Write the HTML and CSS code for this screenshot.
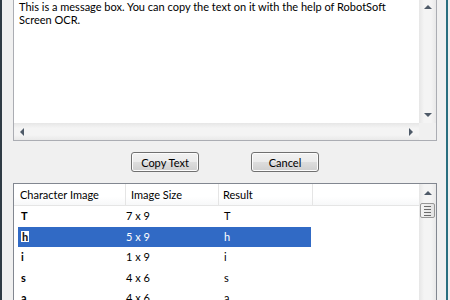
FILE: index.html
```html
<!DOCTYPE html>
<html lang="en">
<head>
    <meta charset="UTF-8">
    <meta name="viewport" content="width=device-width, initial-scale=1.0">
    <title>RobotSoft Screen OCR</title>
    <link rel="stylesheet" href="styles.css">
</head>
<body>
    <div class="window">
        <div class="message-box">
            <div class="message-main">
                <p class="message-text">This is a message box. You can copy the text on it with the help of RobotSoft<br>Screen OCR.</p>
                <div class="vscroll">
                    <span class="arrow up"></span>
                    <span class="arrow down"></span>
                </div>
            </div>
            <div class="hscroll">
                <div class="hscroll-track">
                    <span class="arrow left"></span>
                    <span class="arrow right"></span>
                </div>
                <div class="corner"></div>
            </div>
        </div>

        <div class="button-row">
            <button type="button">Copy Text</button>
            <button type="button">Cancel</button>
        </div>

        <div class="result-list">
            <div class="list-main">
                <div class="list-header">
                    <div class="col col-char">Character Image</div>
                    <div class="col col-size">Image Size</div>
                    <div class="col col-result">Result</div>
                    <div class="col col-fill"></div>
                </div>
                <div class="list-row">
                    <span class="char-img">T</span><span>7 x 9</span><span>T</span>
                </div>
                <div class="list-row selected">
                    <span class="char-img"><b class="glyph">h</b></span><span>5 x 9</span><span>h</span>
                </div>
                <div class="list-row">
                    <span class="char-img">i</span><span>1 x 9</span><span>i</span>
                </div>
                <div class="list-row">
                    <span class="char-img">s</span><span>4 x 6</span><span>s</span>
                </div>
                <div class="list-row">
                    <span class="char-img">a</span><span>4 x 6</span><span>a</span>
                </div>
            </div>
            <div class="list-scroll">
                <div class="scroll-btn"><span class="arrow up"></span></div>
                <div class="thumb"><i></i><i></i><i></i><i></i></div>
            </div>
        </div>
    </div>
</body>
</html>
```

FILE: styles.css
```css
* {
    box-sizing: border-box;
    margin: 0;
    padding: 0;
}

body {
    width: 450px;
    height: 300px;
    overflow: hidden;
    background: #f0f0f0;
    font-family: Lato, "Open Sans", sans-serif;
    font-size: 11px;
    color: #000;
}

.window {
    width: 448px;
    height: 300px;
    display: flex;
    flex-direction: column;
    padding: 0 9px 0 11px;
    border-left: 2px solid #2f3b45;
    border-right: 2px solid #2a6f80;
}

/* message box */
.message-box {
    flex-shrink: 0;
    height: 141px;
    display: flex;
    flex-direction: column;
    background: #fff;
    border: 1px solid #abadb3;
    border-top: none;
}

.message-main {
    flex: 1;
    display: flex;
}

.message-text {
    flex: 1;
    padding: 0 5px;
    line-height: 13px;
}

.vscroll {
    width: 17px;
    display: flex;
    flex-direction: column;
    justify-content: space-between;
    align-items: center;
    padding: 5px 0 6px;
    background: linear-gradient(to right, #e6e6e6, #f4f4f4 30%, #f4f4f4 70%, #e9e9e9);
}

.hscroll {
    height: 17px;
    display: flex;
}

.hscroll-track {
    flex: 1;
    display: flex;
    justify-content: space-between;
    align-items: center;
    padding: 0 6px;
    background: linear-gradient(#e6e6e6, #f4f4f4 30%, #f4f4f4 70%, #e9e9e9);
}

.corner {
    width: 17px;
    background: #f0f0f0;
}

.arrow {
    width: 0;
    height: 0;
    border: 4px solid transparent;
}

.arrow.up {
    border-top: none;
    border-bottom: 4px solid #4e5a68;
}

.arrow.down {
    border-bottom: none;
    border-top: 4px solid #4e5a68;
}

.arrow.left {
    border-left: none;
    border-right: 4px solid #4e5a68;
}

.arrow.right {
    border-right: none;
    border-left: 4px solid #4e5a68;
}

/* buttons */
.button-row {
    flex-shrink: 0;
    display: flex;
    justify-content: center;
    gap: 52px;
    margin-top: 11px;
}

button {
    width: 68px;
    height: 20px;
    border: 1px solid #707070;
    border-radius: 3px;
    background: linear-gradient(#f2f2f2, #ebebeb 50%, #dddddd 51%, #cfcfcf);
    box-shadow: inset 0 0 0 1px #fcfcfc;
    font-family: inherit;
    font-size: 11px;
    color: #000;
}

/* result list */
.result-list {
    flex: 1;
    min-height: 0;
    overflow: hidden;
    margin-top: 11px;
    display: flex;
    background: #fff;
    border: 1px solid #828790;
    border-bottom: none;
}

.list-main {
    flex: 1;
}

.list-header {
    display: flex;
    height: 22px;
    border-bottom: 1px solid #e5e5e5;
    background: linear-gradient(#fff, #fff 60%, #f7f8f9);
}

.col {
    line-height: 21px;
    border-right: 1px solid #e5e5e5;
    white-space: nowrap;
}

.col-char {
    width: 112px;
    padding-left: 6px;
}

.col-size {
    width: 93px;
    padding-left: 5px;
}

.col-result {
    width: 94px;
    padding-left: 4px;
}

.col-fill {
    flex: 1;
    border-right: none;
}

.list-row {
    display: grid;
    grid-template-columns: 104px 93px 96px;
    width: 293px;
    height: 20.5px;
    margin-left: 4px;
    line-height: 20.5px;
}

.list-row span:first-child {
    padding-left: 3px;
}

.list-row span:nth-child(2) {
    padding-left: 4px;
}

.list-row span:nth-child(3) {
    padding-left: 9px;
}

.char-img {
    font-weight: bold;
}

.list-row.selected {
    background: #316ac5;
    color: #fff;
}

.glyph {
    display: inline-block;
    background: #fff;
    color: #1a1a1a;
    line-height: 11px;
    padding: 0 1px;
}

.list-scroll {
    width: 17px;
    background: linear-gradient(to right, #e6e6e6, #f4f4f4 30%, #f4f4f4 70%, #e9e9e9);
}

.scroll-btn {
    height: 18px;
    display: flex;
    justify-content: center;
    align-items: center;
}

.thumb {
    height: 15px;
    margin: 1px 1px 0;
    display: flex;
    flex-direction: column;
    justify-content: center;
    align-items: center;
    gap: 2px;
    border: 1px solid #979797;
    border-radius: 2px;
    background: linear-gradient(to right, #f3f3f3, #e3e3e3);
}

.thumb i {
    width: 7px;
    height: 1px;
    background: #6b6b6b;
}
```
